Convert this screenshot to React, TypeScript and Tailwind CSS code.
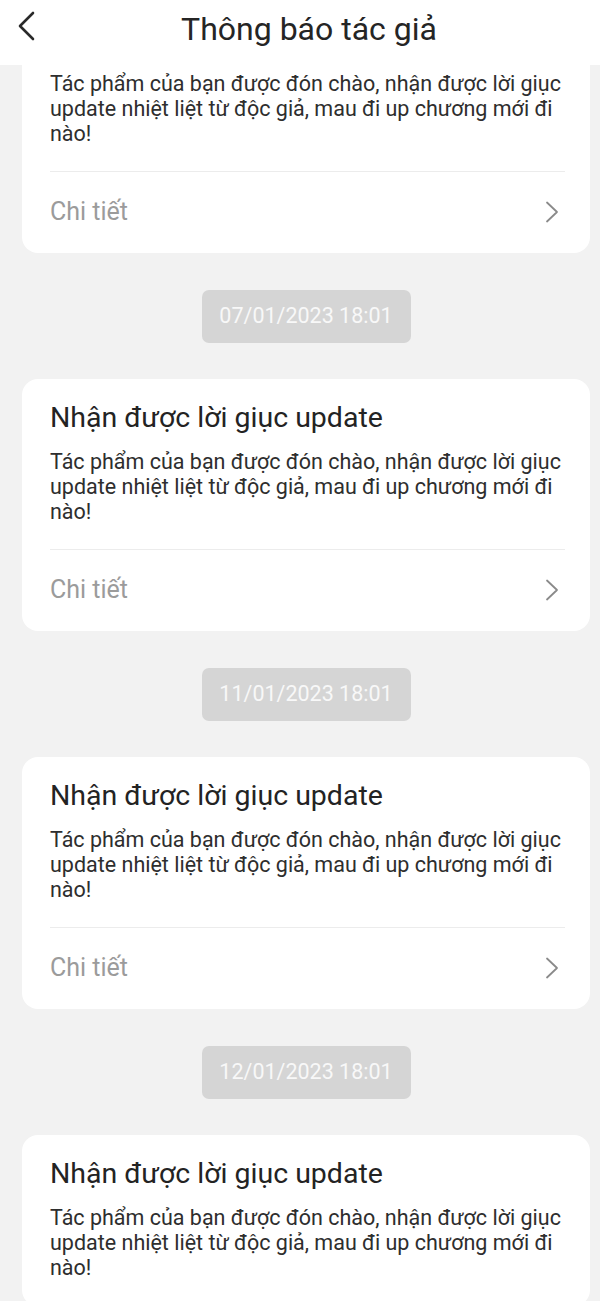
import React from "react";

const body =
  "Tác phẩm của bạn được đón chào, nhận được lời giục update nhiệt liệt từ độc giả, mau đi up chương mới đi nào!";

const dates = ["07/01/2023 18:01", "11/01/2023 18:01", "12/01/2023 18:01"];

function Chevron() {
  return (
    <svg width="14" height="22" viewBox="0 0 14 22" fill="none" className="shrink-0">
      <path d="M2 1.5 L12 11 L2 20.5" stroke="#8a8a8a" strokeWidth="1.8" strokeLinecap="round" strokeLinejoin="round" />
    </svg>
  );
}

function CardFooter() {
  return (
    <>
      <div className="mt-[25px] ml-[28px] mr-[25px] h-px bg-[#ececec]" />
      <div className="mt-[25px] h-[30px] pl-[28px] pr-[31px] flex items-center justify-between">
        <span className="text-[25px] leading-[30px] text-[#9b9b9b]">Chi tiết</span>
        <Chevron />
      </div>
    </>
  );
}

function NoticeCard({ footer = true }: { footer?: boolean }) {
  return (
    <div className="bg-white rounded-[16px] pt-[22px] pb-[26px]">
      <div className="px-[28px]">
        <h2 className="text-[28.5px] leading-[34px] text-[#232323] font-normal">Nhận được lời giục update</h2>
        <p className="mt-[14px] text-[21.5px] leading-[25px] text-[#2e2e2e]">{body}</p>
      </div>
      {footer && <CardFooter />}
    </div>
  );
}

// first card is scrolled under the header: only its lower part shows
function PartialCard() {
  return (
    <div className="bg-white rounded-b-[16px] pt-[6px] pb-[26px]">
      <p className="px-[28px] text-[21.5px] leading-[25px] text-[#2e2e2e]">{body}</p>
      <CardFooter />
    </div>
  );
}

function DatePill({ date }: { date: string }) {
  return (
    <div className="mt-[37px] mb-[36px] flex justify-center">
      <div className="w-[209px] h-[53px] rounded-[7px] bg-[#d5d5d5] flex items-center justify-center text-[21.5px] text-[#f8f8f8]">
        {date}
      </div>
    </div>
  );
}

export default function App() {
  return (
    <div className="w-[600px] h-[1301px] overflow-hidden bg-[#f2f2f2] flex flex-col" style={{ fontFamily: "Roboto, 'Noto Sans', sans-serif" }}>
      <header className="relative z-10 h-[65px] shrink-0 bg-white flex justify-center pt-[9px] pl-[18px]">
        <button className="absolute left-[12px] top-[9px] w-[28px] h-[34px] flex items-center justify-center">
          <svg width="20" height="32" viewBox="0 0 20 32" fill="none">
            <path d="M17 3 L4 16 L17 29" stroke="#2a2a2a" strokeWidth="2.6" strokeLinecap="round" strokeLinejoin="round" />
          </svg>
        </button>
        <h1 className="text-[32px] leading-[40px] text-[#252525] font-normal">Thông báo tác giả</h1>
      </header>
      <main className="flex-1 overflow-hidden">
        <div className="pl-[22px] pr-[10px]">
          <PartialCard />
          {dates.map((d, i) => (
            <React.Fragment key={d}>
              <DatePill date={d} />
              <NoticeCard footer={i < dates.length - 1} />
            </React.Fragment>
          ))}
        </div>
      </main>
    </div>
  );
}
